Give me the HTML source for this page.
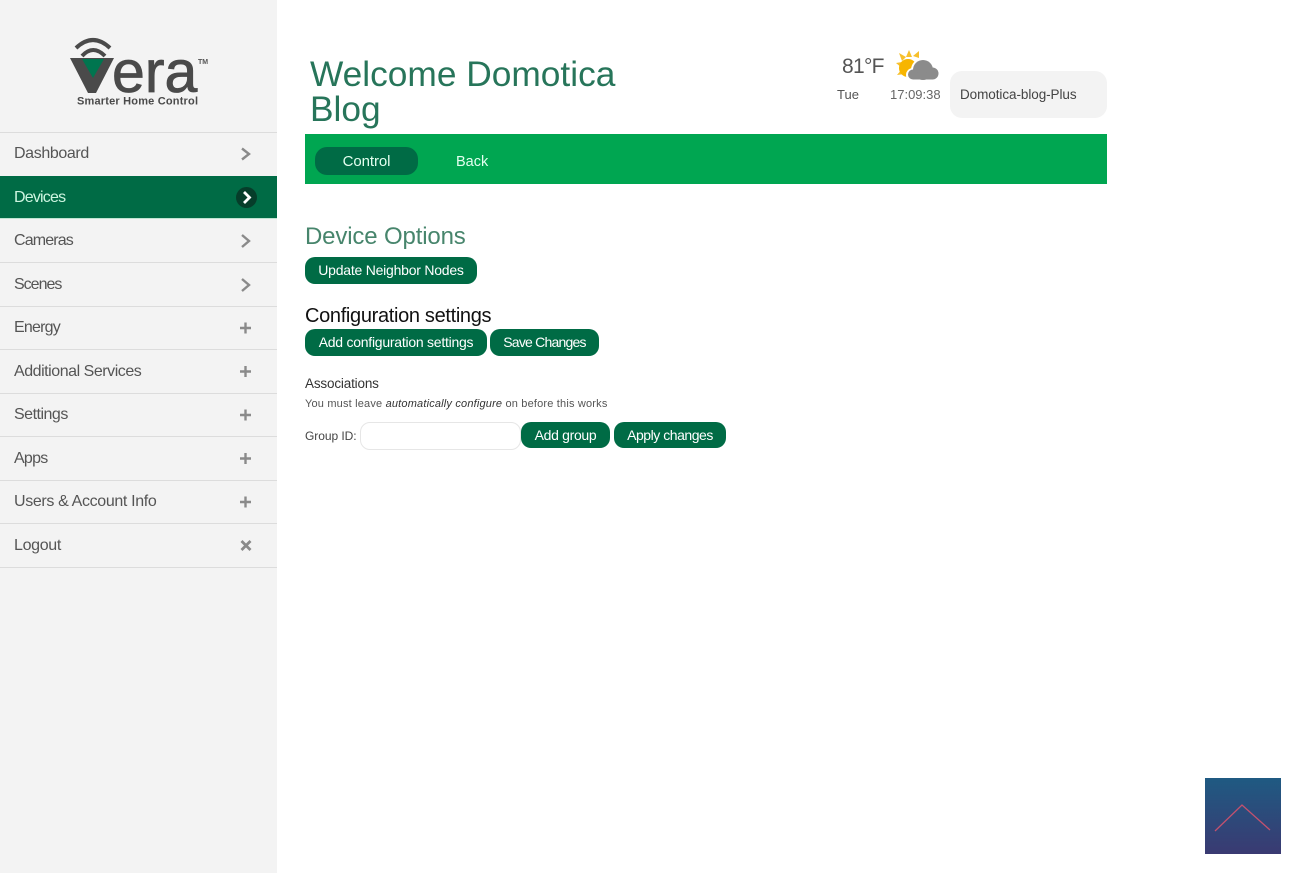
<!DOCTYPE html>
<html lang="en"><head><meta charset="utf-8"><title>Vera</title>
<style>
html,body{margin:0;padding:0;background:#fff}
body{width:1300px;height:873px;position:relative;overflow:hidden;font-family:"Liberation Sans",sans-serif;color:#444}
.a{position:absolute;white-space:nowrap}
#side{position:absolute;left:0;top:0;width:277px;height:873px;background:#f3f3f3}
.row{position:absolute;left:0;width:277px;height:43px;border-top:1px solid #dcdcdc;box-sizing:border-box}
.row span{position:absolute;left:14px;top:12px;font-size:16px;line-height:18px;color:#555}
.btn{position:absolute;background:#006b45;color:#fff;border-radius:10px;font-size:14px;text-align:center;box-sizing:border-box;white-space:nowrap}
svg{position:absolute;overflow:visible}
</style></head><body>
<div id="side">
<svg style="left:0;top:0" width="277" height="130">
<path d="M76 48Q93 32 110 48" fill="none" stroke="#4a4a4a" stroke-width="4"/>
<path d="M82 56Q93 44 105 56" fill="none" stroke="#4a4a4a" stroke-width="4"/>
<polygon points="70,58 114,58 96,93 88,93" fill="#4a4a4a"/>
<polygon points="82,59 104,59 93,78" fill="#00754f"/>
<text x="112" y="92" font-family="Liberation Sans" font-size="59" fill="#4a4a4a" stroke="#4a4a4a" stroke-width="0.8">era</text>
<text x="198" y="64" font-family="Liberation Sans" font-size="7" font-weight="bold" fill="#555">TM</text>
<text x="77" y="104.500" font-family="Liberation Sans" font-size="11" font-weight="bold" fill="#4a4a4a" textLength="121">Smarter Home Control</text>
</svg>
<div class="row" style="top:132px"><span style="letter-spacing:-.38px">Dashboard</span></div>
<div class="row" style="top:176px;height:43px;background:#006b45;border-top:0;border-bottom:1px solid #bfe5d2"><span style="top:13px;color:#cdf5e0;letter-spacing:-.8px">Devices</span></div>
<div class="row" style="top:219px;border-top:0"><span style="top:13px;letter-spacing:-.85px">Cameras</span></div>
<div class="row" style="top:262px"><span style="top:13px;letter-spacing:-1px">Scenes</span></div>
<div class="row" style="top:306px"><span style="letter-spacing:-.8px">Energy</span></div>
<div class="row" style="top:349px"><span style="top:13px;letter-spacing:-.46px">Additional Services</span></div>
<div class="row" style="top:393px"><span style="letter-spacing:-.5px">Settings</span></div>
<div class="row" style="top:436px"><span style="top:13px;letter-spacing:-.75px">Apps</span></div>
<div class="row" style="top:480px"><span style="letter-spacing:-.35px">Users &amp; Account Info</span></div>
<div class="row" style="top:523px;height:45px;border-bottom:1px solid #dcdcdc"><span style="top:13px;letter-spacing:-.33px">Logout</span></div>
<svg style="left:0;top:0" width="277" height="570" fill="none" stroke="#8a8a8a" stroke-width="2.400">
<path d="M242 148.500L249 154L242 159.500"/>
<circle cx="246.500" cy="197.500" r="10.500" fill="#063d2a" stroke="none"/>
<path d="M244 192L249.500 197.500L244 203" stroke="#fff" stroke-width="2.800"/>
<path d="M242 235L249 241L242 247"/>
<path d="M242 279L249 285L242 291"/>
<path d="M240 328H251M245.500 322.500V333.500"/>
<path d="M240 371.500H251M245.500 366V377"/>
<path d="M240 415H251M245.500 409.500V420.500"/>
<path d="M240 458.500H251M245.500 453V464"/>
<path d="M240 502H251M245.500 496.500V507.500"/>
<path d="M241.500 541L250.500 550M250.500 541L241.500 550" stroke-width="2.800"/>
</svg>
</div>

<div class="a" style="left:310px;top:57px;font-size:35.300px;line-height:35px;color:#27755a;white-space:normal;width:320px">Welcome Domotica Blog</div>

<div class="a" style="left:842px;top:54px;font-size:21px;line-height:25px;color:#555;letter-spacing:-.7px">81°F</div>
<svg style="left:895px;top:49px" width="46" height="33">
<g fill="#f7c02c"><polygon points="14,1 17,8 11,8"/><polygon points="4,4 11,8 7,12"/><polygon points="1,14 7,13 7,19"/><polygon points="2,26 7,20 10,25"/><polygon points="24,2 24,9 18,7"/></g>
<circle cx="13" cy="19" r="9" fill="#f7b500"/>
<g fill="#fff"><circle cx="28" cy="21" r="12"/><circle cx="18" cy="26" r="7"/></g>
<g fill="#8b8b8b"><circle cx="28" cy="21" r="10"/><circle cx="37.500" cy="24.500" r="6"/><circle cx="18" cy="25.500" r="5"/><rect x="18" y="24" width="20" height="6.500"/></g>
</svg>
<div class="a" style="left:837px;top:87px;font-size:13px;line-height:16px;color:#555">Tue</div>
<div class="a" style="left:890px;top:87px;font-size:13px;line-height:16px;color:#666">17:09:38</div>
<div class="a" style="left:950px;top:71px;width:157px;height:47px;background:#f3f3f3;border-radius:12px"></div>
<div class="a" style="left:960px;top:87px;font-size:13.500px;line-height:16px;color:#444;letter-spacing:-.07px">Domotica-blog-Plus</div>

<div class="a" style="left:305px;top:134px;width:802px;height:50px;background:#00a651"></div>
<div class="btn" style="left:315px;top:147px;width:103px;height:28px;line-height:29px;font-size:15px;border-radius:12px;color:#e4fff0;letter-spacing:-.1px">Control</div>
<div class="a" style="left:456px;top:153px;font-size:14.500px;line-height:18px;color:#e4fff0">Back</div>

<div class="a" style="left:305px;top:223px;font-size:24px;line-height:28px;color:#47856c;letter-spacing:-.15px">Device Options</div>
<div class="btn" style="left:305px;top:257px;width:172px;height:27px;line-height:27px;letter-spacing:-.23px">Update Neighbor Nodes</div>
<div class="a" style="left:305px;top:304px;font-size:20px;line-height:24px;color:#111;letter-spacing:-.33px">Configuration settings</div>
<div class="btn" style="left:305px;top:329px;width:182px;height:27px;line-height:27px;letter-spacing:-.25px">Add configuration settings</div>
<div class="btn" style="left:490px;top:329px;width:109px;height:27px;line-height:27px;letter-spacing:-.78px">Save Changes</div>
<div class="a" style="left:305px;top:376px;font-size:13.500px;line-height:16px;color:#333;letter-spacing:-.17px">Associations</div>
<div class="a" style="left:305px;top:397px;font-size:11px;line-height:14px;color:#555;letter-spacing:.18px">You must leave <i style="color:#333">automatically configure</i> on before this works</div>
<div class="a" style="left:305px;top:429px;font-size:12px;line-height:15px;color:#444;letter-spacing:-.05px">Group ID:</div>
<div class="a" style="left:360px;top:422px;width:161px;height:28px;box-sizing:border-box;border:1px solid #e6e6e6;border-radius:10px;background:#fff"></div>
<div class="btn" style="left:521px;top:422px;width:89px;height:26px;line-height:26px;letter-spacing:-.33px">Add group</div>
<div class="btn" style="left:614px;top:422px;width:112px;height:26px;line-height:26px;letter-spacing:-.46px">Apply changes</div>

<div class="a" style="left:1205px;top:778px;width:76px;height:76px;background:linear-gradient(#1f5a82,#3a3a72)"></div>
<svg style="left:1205px;top:778px" width="76" height="76"><path d="M10 53L37 27L65 52" fill="none" stroke="#c2516f" stroke-width="1.300"/></svg>
</body></html>
